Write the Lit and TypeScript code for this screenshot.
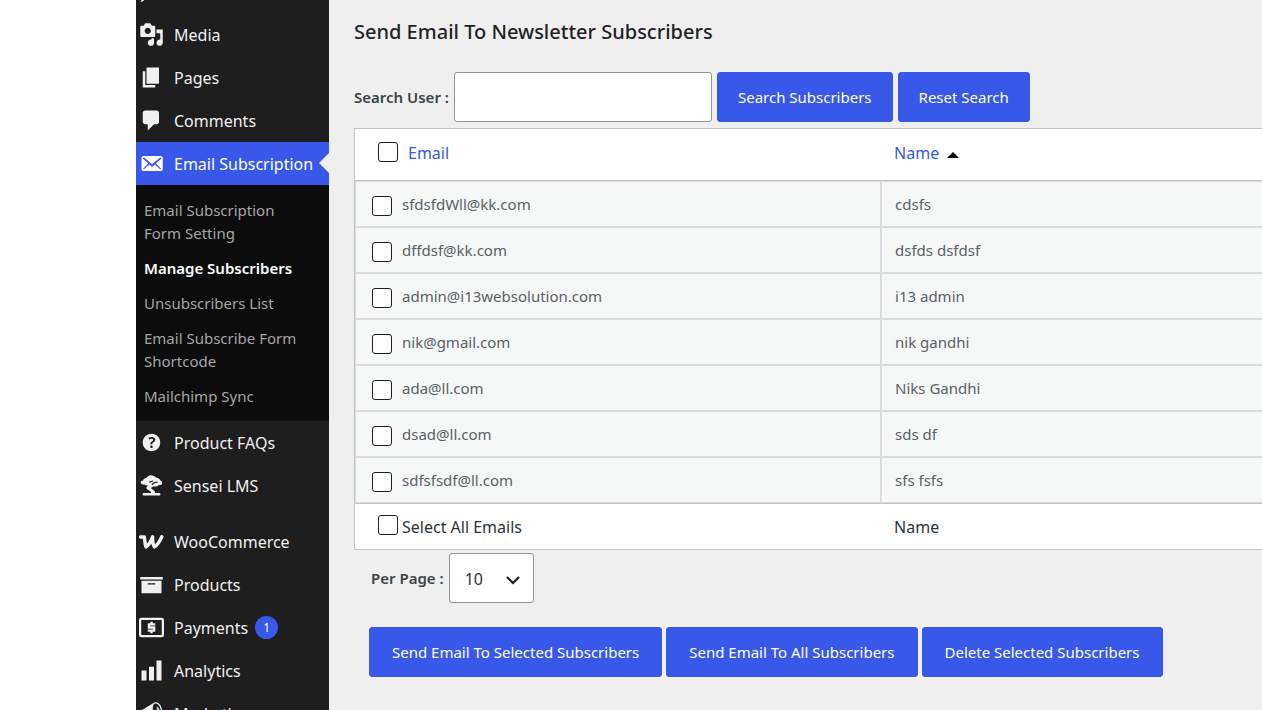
import { LitElement, html, svg, css } from "lit";
import { customElement, property } from "lit/decorators.js";

const icons: Record<string, unknown> = {
  posts: svg`<path d="M10.440 3.020l1.820-1.820 6.360 6.350-1.830 1.820c-1.050-.68-2.480-.57-3.410.36l-.75.750c-.92.930-1.040 2.350-.35 3.410l-1.830 1.820-2.410-2.410-2.800 2.790c-.42.420-3.380 2.710-3.800 2.290s1.860-3.390 2.280-3.810l2.790-2.790L4.100 9.360l1.830-1.820c1.050.69 2.480.57 3.400-.36l.75-.75c.93-.92 1.050-2.350.36-3.410z"/>`,
  media: svg`<path d="M13 11V4c0-.55-.45-1-1-1h-1.67L9 1H5L3.67 3H2c-.55 0-1 .45-1 1v7c0 .55.45 1 1 1h10c.55 0 1-.45 1-1zM7 4.5c1.38 0 2.5 1.12 2.5 2.5S8.38 9.5 7 9.5 4.5 8.38 4.5 7 5.62 4.5 7 4.5zM14 6h5v10.5c0 1.38-1.12 2.5-2.5 2.5S14 17.88 14 16.5s1.12-2.5 2.5-2.5c.17 0 .34.02.5.05V9h-3V6zm-4 8.05V13h2v3.5c0 1.38-1.12 2.5-2.5 2.5S7 17.88 7 16.5 8.12 14 9.5 14c.17 0 .34.02.5.05z"/>`,
  pages: svg`<path d="M6 15V2h10v13H6zm-1 1h8v2H3V5h2v11z"/>`,
  comments: svg`<path d="M5 2h9c1.1 0 2 .9 2 2v7c0 1.1-.9 2-2 2h-2l-5 5v-5H5c-1.1 0-2-.9-2-2V4c0-1.1.9-2 2-2z"/>`,
  email: svg`<path d="M19 14.5v-9c0-.83-.67-1.5-1.5-1.5H3.49c-.83 0-1.5.67-1.5 1.5v9c0 .83.67 1.5 1.5 1.5H17.5c.83 0 1.5-.67 1.5-1.5zm-1.31-9.11c.33.33.15.67-.03.84L13.6 9.95l3.9 4.06c.12.14.2.36.06.51-.13.16-.43.15-.56.05l-4.37-3.73-2.14 1.95-2.13-1.95-4.37 3.73c-.13.1-.43.11-.56-.05-.14-.15-.06-.37.06-.51l3.9-4.06-4.06-3.72c-.18-.17-.36-.51-.03-.84s.67-.17.95.07l6.24 5.04 6.25-5.04c.28-.24.62-.4.95-.07z"/>`,
  help: svg`<path d="M17 10c0-3.87-3.14-7-7-7-3.87 0-7 3.13-7 7s3.13 7 7 7c3.86 0 7-3.13 7-7zm-6.3 1.48H9.14v-.43c0-.38.08-.7.24-.98s.46-.57.88-.89c.41-.29.68-.53.81-.71.14-.18.2-.39.2-.62 0-.25-.09-.44-.28-.58-.19-.13-.45-.19-.79-.19-.58 0-1.25.15-2 .46l-.64-1.28c.87-.49 1.8-.74 2.77-.74.81 0 1.45.2 1.92.58.48.39.71.91.71 1.55 0 .43-.09.8-.29 1.11-.19.32-.57.67-1.11 1.06-.38.28-.61.49-.71.63-.1.15-.15.34-.15.57v.46zm-1.47 2.74c-.18-.17-.27-.42-.27-.73 0-.33.08-.58.26-.75s.43-.25.77-.25c.32 0 .57.09.75.26s.27.42.27.74c0 .3-.09.55-.27.72-.18.18-.43.27-.75.27-.33 0-.58-.09-.76-.26z"/>`,
  sensei: svg`<path d="M9.6 1.8c1.700 0 2.800.8 4 1.700 1.800.3 3 1.100 3.300 2.300 1.300.5 1.900 1.700 1.600 2.700-.4 1-1.700 1.300-2.800 1-.8 1.300-2.600 1.600-4 1.100L9.400 12l3 2.400c.5.5.5 1 .3 1.500H16c1.600 0 1.600 2.100 0 2.100H4c-1.600 0-1.600-2.100 0-2.100h5c.8 0 .9-.6.3-1.100L6.500 13c-.9-.8-.8-1.800.1-2.500l.9-.8c-1.200.4-2.300.2-3-.5-1.500.3-3-.3-3.200-1.400-.2-1 .8-1.700 2-1.800.2-1.200 1.200-1.900 2.500-2C6.700 2.700 8 1.800 9.600 1.800z"/><path d="M8.200 7.300l3-.9M10.300 9.200l1.800-1.400 2.700-.5" fill="none" stroke="#1e1e1e" stroke-width="1"/>`,
  woo: svg`<path d="M1.300 6.300h2.900c.6 2.500.3 5.500 1.500 8 2.300-1.700 4-4.600 5.200-8-.2 3 0 6 1.500 8 2.600-1.600 4.300-4.600 5.800-8" fill="none" stroke="currentColor" stroke-width="2.800" stroke-linecap="round" stroke-linejoin="round"/>`,
  archive: svg`<path d="M19 4v2H1V4h18zM2 7h16v10H2V7zm11 3V9H7v1h6z"/>`,
  payments: svg`<rect x=".9" y="3.100" width="18.200" height="13.800" rx="1" fill="none" stroke="currentColor" stroke-width="1.800"/><path d="M13 7.500H8v2.500h4.100v2.500H7M10 5.400v2M10 12.600v2" fill="none" stroke="currentColor" stroke-width="1.900"/>`,
  chart: svg`<path d="M18 18V2h-4v16h4zm-6 0V7H8v11h4zm-6 0v-8H2v8h4z"/>`,
  megaphone: svg`<path d="M18.150 5.940c.46 1.620.38 3.220-.02 4.480-.42 1.280-1.260 2.180-2.300 2.480-.16.060-.26.060-.4.060-.06.020-.12.020-.18.020-.06.020-.14.020-.22.020h-6.800l2.220 5.500c.02.140-.06.260-.14.340-.08.100-.24.160-.34.160H6.950c-.1 0-.26-.06-.34-.16-.08-.08-.16-.2-.14-.34l-1-5.500H4.250l-.02-.02c-.5.060-1.080-.18-1.540-.62s-.88-1.080-1.060-1.880c-.24-.8-.2-1.560-.02-2.200.18-.62.58-1.080 1.060-1.300l.02-.02 9-5.400c.1-.06.18-.1.240-.16.060-.04.140-.08.240-.12.160-.08.280-.12.500-.18 1.040-.3 2.240.1 3.220.98s1.840 2.240 2.260 3.860zm-2.580 5.980h-.02c.4-.1.740-.34 1.040-.7.580-.7.860-1.760.86-3.040 0-.64-.1-1.300-.28-1.980-.34-1.360-1.020-2.500-1.780-3.240s-1.680-1.100-2.460-.88c-.82.220-1.400.96-1.700 2-.32 1.040-.28 2.360.06 3.720.38 1.360 1 2.500 1.800 3.240.78.740 1.620 1.100 2.480.88z"/><path d="M14.200 5.200c.7.300 1.200 1.200 1.500 2.300" fill="none" stroke="currentColor" stroke-width="1.200"/>`,
};

interface MenuEntry {
  icon: string;
  label: string;
  count?: number;
  group?: boolean;
  children?: string[];
}

const menu: MenuEntry[] = [
  { icon: "posts", label: "Posts" },
  { icon: "media", label: "Media" },
  { icon: "pages", label: "Pages" },
  { icon: "comments", label: "Comments" },
  {
    icon: "email",
    label: "Email Subscription",
    children: [
      "Email Subscription Form Setting",
      "Manage Subscribers",
      "Unsubscribers List",
      "Email Subscribe Form Shortcode",
      "Mailchimp Sync",
    ],
  },
  { icon: "help", label: "Product FAQs" },
  { icon: "sensei", label: "Sensei LMS" },
  { icon: "woo", label: "WooCommerce", group: true },
  { icon: "archive", label: "Products" },
  { icon: "payments", label: "Payments", count: 1 },
  { icon: "chart", label: "Analytics" },
  { icon: "megaphone", label: "Marketing" },
];

const subscribers = [
  ["sfdsfdWll@kk.com", "cdsfs"],
  ["dffdsf@kk.com", "dsfds dsfdsf"],
  ["admin@i13websolution.com", "i13 admin"],
  ["nik@gmail.com", "nik gandhi"],
  ["ada@ll.com", "Niks Gandhi"],
  ["dsad@ll.com", "sds df"],
  ["sdfsfsdf@ll.com", "sfs fsfs"],
];

@customElement("admin-menu")
export class AdminMenu extends LitElement {
  @property() current = "";

  static styles = css`
    :host {
      display: block;
      background: #1e1e1e;
      overflow: hidden;
    }
    ul {
      list-style: none;
      margin: 0;
      padding: 0;
    }
    /* The menu is scrolled so that its first entry is partly out of view. */
    .menu {
      margin-top: -30px;
    }
    .group {
      margin-top: 13px;
    }
    .item {
      display: flex;
      align-items: center;
      gap: 10px;
      height: 43px;
      padding-left: 3px;
      color: #f0f0f1;
      font-size: 16px;
      white-space: nowrap;
      text-decoration: none;
      position: relative;
    }
    .open {
      background: #3858e9;
      color: #fff;
    }
    .open::after {
      content: "";
      position: absolute;
      right: 0;
      top: 11px;
      border: 10px solid transparent;
      border-left-width: 0;
      border-right-color: #efefef;
    }
    .icon {
      width: 25px;
      height: 25px;
      fill: currentColor;
      flex: none;
    }
    .count {
      display: grid;
      place-items: center;
      width: 23px;
      height: 23px;
      margin-left: -3px;
      border-radius: 50%;
      background: #3858e9;
      color: #fff;
      font-size: 12px;
    }
    .submenu {
      background: #0c0c0c;
      padding: 8px 0 7px;
    }
    .sub {
      display: block;
      padding: 6px 24px 6px 8px;
      color: #a5a5a5;
      font-size: 15px;
      line-height: 23px;
      text-decoration: none;
    }
    .current {
      color: #fff;
      font-weight: 600;
    }
  `;

  render() {
    return html`<nav aria-label="Admin menu">
      <ul class="menu">
        ${menu.map(
          (m) => html`<li class=${m.group ? "group" : ""}>
            <a class="item ${m.children ? "open" : ""}" href="#">
              <svg class="icon" viewBox="0 0 20 20" aria-hidden="true">${icons[m.icon]}</svg>
              <span>${m.label}</span>
              ${m.count ? html`<span class="count">${m.count}</span>` : ""}
            </a>
            ${m.children
              ? html`<ul class="submenu">
                  ${m.children.map(
                    (c) => html`<li><a class="sub ${c === this.current ? "current" : ""}" href="#">${c}</a></li>`
                  )}
                </ul>`
              : ""}
          </li>`
        )}
      </ul>
    </nav>`;
  }
}

@customElement("app-root")
export class AppRoot extends LitElement {
  static styles = css`
    :host {
      display: grid;
      grid-template-columns: 193px minmax(0, 1fr);
      height: 100vh;
      padding-left: 136px;
      box-sizing: border-box;
      overflow: hidden;
      background: #fff;
      color: #3c434a;
      font-family: "Noto Sans", "Open Sans", sans-serif;
      font-size: 15px;
    }
    main {
      background: #efefef;
      padding: 16px 0 0 25px;
      overflow: hidden;
    }
    h1 {
      margin: 0 0 24px;
      color: #1d2327;
      font-size: 20px;
      line-height: 32px;
      font-weight: 500;
    }
    .search,
    .paging,
    .actions {
      display: flex;
      align-items: center;
      gap: 5px;
    }
    .search {
      margin-bottom: 6px;
    }
    .caption {
      font-size: 15px;
      font-weight: 600;
      white-space: nowrap;
    }
    .field {
      box-sizing: border-box;
      width: 258px;
      height: 50px;
      padding: 0 12px;
      border: 1px solid #949494;
      border-radius: 3px;
      background: #fff;
      font: inherit;
    }
    .button {
      height: 50px;
      padding: 0 20px;
      border: 1px solid #3858e9;
      border-radius: 3px;
      background: #3858e9;
      color: #fff;
      font: inherit;
      white-space: nowrap;
    }
    .table {
      width: 100%;
      border-collapse: separate;
      border-spacing: 0;
      border: solid #c3c4c7;
      border-width: 1px 0 1px 1px;
      background: #fff;
      table-layout: fixed;
    }
    .email-col {
      width: 58%;
    }
    th,
    td {
      box-sizing: border-box;
      padding: 0 13px;
      text-align: left;
      font-weight: 400;
    }
    th {
      font-size: 16px;
    }
    thead th {
      height: 52px;
      padding-bottom: 3px;
      border-bottom: 1px solid #c3c4c7;
    }
    tfoot th {
      height: 46px;
      border-top: 1px solid #c3c4c7;
      color: #2c3338;
    }
    td {
      height: 46px;
      border: 1px solid #dcdcde;
      background: #f6f8f7;
      color: #5b6065;
    }
    td:last-child {
      border-right: 0;
    }
    th:first-child {
      padding-left: 23px;
    }
    td:first-child {
      padding-left: 16px;
    }
    .pick {
      display: flex;
      align-items: center;
      gap: 10px;
    }
    .tight {
      gap: 4px;
    }
    .box {
      appearance: none;
      box-sizing: border-box;
      width: 20px;
      height: 20px;
      margin: 0;
      border: 1px solid #1e1e1e;
      border-radius: 3px;
      background: #fff;
      flex: none;
    }
    th .box {
      margin-bottom: 3px;
    }
    td .box {
      margin-top: 3px;
    }
    .sort {
      color: #3858e9;
      text-decoration: none;
    }
    .arrow {
      display: inline-block;
      margin: 0 0 1px 4px;
      border: 6px solid transparent;
      border-top-width: 0;
      border-bottom-color: #000;
    }
    .paging {
      padding: 3px 0 0 17px;
    }
    .select {
      position: relative;
    }
    .size {
      appearance: none;
      box-sizing: border-box;
      width: 85px;
      height: 50px;
      padding: 2px 15px 0;
      border: 1px solid #949494;
      border-radius: 3px;
      background: #fff;
      color: #2c3338;
      font: inherit;
      font-size: 16px;
    }
    .chevron {
      position: absolute;
      right: 12px;
      top: 18px;
      width: 18px;
      height: 18px;
      pointer-events: none;
    }
    .actions {
      gap: 4px;
      padding: 24px 0 0 15px;
    }
    .actions .button {
      padding: 0 22px;
    }
  `;

  render() {
    return html`
      <admin-menu current="Manage Subscribers"></admin-menu>
      <main>
        <h1>Send Email To Newsletter Subscribers</h1>
        <form class="search">
          <label class="caption" for="search">Search User :</label>
          <input class="field" id="search" type="text" />
          <button class="button" type="button">Search Subscribers</button>
          <button class="button" type="button">Reset Search</button>
        </form>
        <table class="table">
          <colgroup>
            <col class="email-col" />
            <col />
          </colgroup>
          <thead>
            <tr>
              <th scope="col">
                <div class="pick">
                  <input class="box" type="checkbox" aria-label="Select all" />
                  <a class="sort" href="#">Email</a>
                </div>
              </th>
              <th scope="col"><a class="sort" href="#">Name <span class="arrow"></span></a></th>
            </tr>
          </thead>
          <tbody>
            ${subscribers.map(
              ([email, name]) => html`<tr>
                <td><label class="pick"><input class="box" type="checkbox" />${email}</label></td>
                <td>${name}</td>
              </tr>`
            )}
          </tbody>
          <tfoot>
            <tr>
              <th scope="col">
                <label class="pick tight"><input class="box" type="checkbox" />Select All Emails</label>
              </th>
              <th scope="col">Name</th>
            </tr>
          </tfoot>
        </table>
        <div class="paging">
          <label class="caption" for="size">Per Page :</label>
          <div class="select">
            <select class="size" id="size">
              <option>10</option>
            </select>
            <svg class="chevron" viewBox="0 0 18 18" aria-hidden="true">
              <path d="M3 6l6 6 6-6" fill="none" stroke="#1e1e1e" stroke-width="2.200" />
            </svg>
          </div>
        </div>
        <div class="actions">
          <button class="button" type="button">Send Email To Selected Subscribers</button>
          <button class="button" type="button">Send Email To All Subscribers</button>
          <button class="button" type="button">Delete Selected Subscribers</button>
        </div>
      </main>
    `;
  }
}
